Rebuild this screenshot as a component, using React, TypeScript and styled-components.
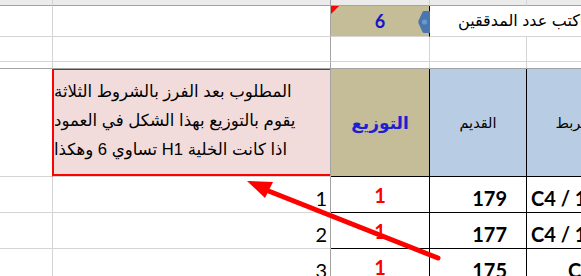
import { Fragment } from "react";
import styled, { createGlobalStyle } from "styled-components";

const GRID = "#d4d4d4";
const FREEZE = "#a3a3a3";
const INK = "#000000";
const RED = "#ff0000";

const GlobalStyle = createGlobalStyle`
  html, body {
    margin: 0;
    padding: 0;
    background: #ffffff;
    overflow: hidden;
  }
`;

const Page = styled.div`
  position: relative;
  width: 581px;
  height: 276px;
  overflow: hidden;
  background: #ffffff;
`;

const Sheet = styled.div`
  display: grid;
  grid-template-columns: 53px 278px 99px 97px 92px;
  grid-template-rows: 6px 31px 25px 7px 108px 36px 36px 36px;
  width: 619px;
`;

const Cell = styled.div<{
  $bg?: string;
  $right?: string;
  $bottom?: string;
  $span?: number;
  $align?: string;
  $valign?: string;
}>`
  position: relative;
  box-sizing: border-box;
  display: flex;
  grid-column: span ${(p) => p.$span ?? 1};
  justify-content: ${(p) => p.$align ?? "flex-start"};
  align-items: ${(p) => p.$valign ?? "center"};
  background: ${(p) => p.$bg ?? "#ffffff"};
  border-right: 1px solid ${(p) => p.$right ?? GRID};
  border-bottom: 1px solid ${(p) => p.$bottom ?? GRID};
  overflow: visible;
  white-space: nowrap;
`;

const Arabic = styled.span`
  font-family: "Liberation Sans", "DejaVu Sans", sans-serif;
  font-size: 16px;
  color: #000;
`;

const PromptText = styled(Arabic)`
  padding-left: 28px;
  margin-top: -2px;
`;

const CountValue = styled.span`
  font-family: Lato, "Liberation Sans", sans-serif;
  font-weight: 700;
  font-size: 18px;
  color: #1414c8;
`;

const CommentMark = styled.span`
  position: absolute;
  top: 0;
  left: 0;
  width: 0;
  height: 0;
  border-top: 8px solid ${RED};
  border-right: 8px solid transparent;
`;

const SpinShape = styled.svg`
  position: absolute;
  right: -1px;
  top: 4px;
`;

const NoteBox = styled.div`
  box-sizing: border-box;
  flex: 1;
  align-self: stretch;
  display: flex;
  flex-direction: column;
  justify-content: center;
  align-items: flex-end;
  gap: 5px;
  padding: 0 12px 2px 0;
  background: #f2dcdb;
  border-top: 1px solid ${RED};
  border-left: 1px solid ${RED};
  border-bottom: 2px solid ${RED};
`;

const NoteLine = styled(Arabic)`
  font-size: 16.6px;
  line-height: 24px;
`;

const HeaderTitle = styled.span`
  font-family: "DejaVu Sans", sans-serif;
  font-weight: 700;
  font-size: 17px;
  color: #1e1ed2;
`;

const HeaderLabel = styled(Arabic)`
  font-size: 14.5px;
`;

const RowNumber = styled.span`
  font-family: Lato, "Liberation Sans", sans-serif;
  font-size: 20px;
  color: #000;
  padding: 0 3px 4px 0;
  line-height: 1;
`;

const Share = styled.span`
  font-family: Lato, "Liberation Sans", sans-serif;
  font-weight: 700;
  font-size: 20px;
  color: ${RED};
`;

const OldValue = styled.span`
  font-family: Lato, "Liberation Sans", sans-serif;
  font-weight: 700;
  font-size: 20px;
  color: #000;
  padding: 0 19px 4px 0;
  line-height: 1;
`;

const Link = styled.span<{ $indent: number }>`
  font-family: Lato, "Liberation Sans", sans-serif;
  font-weight: 700;
  font-size: 20px;
  color: #000;
  padding: 0 0 4px ${(p) => p.$indent}px;
  line-height: 1;
`;

const Arrow = styled.svg`
  position: absolute;
  left: 0;
  top: 0;
  pointer-events: none;
`;

const rows = [
  { n: 1, old: 179, link: "C4 / 1", indent: 4 },
  { n: 2, old: 177, link: "C4 / 1", indent: 4 },
  { n: 3, old: 175, link: "C3 / 1", indent: 41 },
];

export default function App() {
  return (
    <Page>
      <GlobalStyle />
      <Sheet>
        {/* top band */}
        <Cell $bg="#ebebeb" $bottom={FREEZE} />
        <Cell $bg="#ebebeb" $bottom={FREEZE} $right={FREEZE} />
        <Cell $bg="#ebebeb" $bottom={FREEZE} />
        <Cell $bg="#ebebeb" $bottom={FREEZE} />
        <Cell $bg="#ebebeb" $bottom={FREEZE} />

        {/* count row */}
        <Cell />
        <Cell $right={FREEZE} />
        <Cell $bg="#c4bd97" $right={INK} $align="center">
          <CommentMark />
          <CountValue>6</CountValue>
          <SpinShape width="12" height="24" viewBox="0 0 12 24">
            <path
              d="M12 1 L6 1 Q5 1 4.4 2.2 L0.6 10.6 Q0 12 0.6 13.4 L4.4 21.8 Q5 23 6 23 L12 23 Z"
              fill="#4a76ad"
            />
            <circle cx="6.5" cy="12" r="2.6" fill="#6a97cf" />
          </SpinShape>
        </Cell>
        <Cell $span={2}>
          <PromptText dir="rtl">اكتب عدد المدققين</PromptText>
        </Cell>

        {/* empty row */}
        <Cell />
        <Cell $right={FREEZE} />
        <Cell />
        <Cell />
        <Cell />

        {/* thin row */}
        <Cell $bottom={FREEZE} />
        <Cell $bottom={FREEZE} $right={FREEZE} />
        <Cell $bottom={FREEZE} />
        <Cell $bottom={FREEZE} />
        <Cell $bottom={FREEZE} />

        {/* header row */}
        <Cell $right={RED} />
        <Cell $right={FREEZE}>
          <NoteBox dir="rtl">
            <NoteLine>المطلوب بعد الفرز بالشروط الثلاثة</NoteLine>
            <NoteLine>يقوم بالتوزيع بهذا الشكل في العمود</NoteLine>
            <NoteLine>اذا كانت الخلية H1 تساوي 6 وهكذا</NoteLine>
          </NoteBox>
        </Cell>
        <Cell $bg="#c4bd97" $right={INK} $bottom={INK} $align="center">
          <HeaderTitle dir="rtl">التوزيع</HeaderTitle>
        </Cell>
        <Cell $bg="#b8cce4" $right={INK} $bottom={INK} $align="center">
          <HeaderLabel dir="rtl">القديم</HeaderLabel>
        </Cell>
        <Cell $bg="#b8cce4" $right={INK} $bottom={INK} $align="center">
          <HeaderLabel dir="rtl">الربط</HeaderLabel>
        </Cell>

        {rows.map((r) => (
          <Fragment key={r.n}>
            <Cell />
            <Cell $right={FREEZE} $align="flex-end" $valign="flex-end">
              <RowNumber>{r.n}</RowNumber>
            </Cell>
            <Cell $right={INK} $bottom={INK} $align="center">
              <Share>1</Share>
            </Cell>
            <Cell $right={INK} $bottom={INK} $align="flex-end" $valign="flex-end">
              <OldValue>{r.old}</OldValue>
            </Cell>
            <Cell $right={INK} $bottom={INK} $valign="flex-end">
              <Link $indent={r.indent}>{r.link}</Link>
            </Cell>
          </Fragment>
        ))}
      </Sheet>

      <Arrow width="581" height="276" viewBox="0 0 581 276">
        <line x1="438" y1="258" x2="266" y2="190" stroke={RED} strokeWidth="5" strokeLinecap="round" />
        <polygon points="247,181 273,182 265,198" fill={RED} />
      </Arrow>
    </Page>
  );
}
